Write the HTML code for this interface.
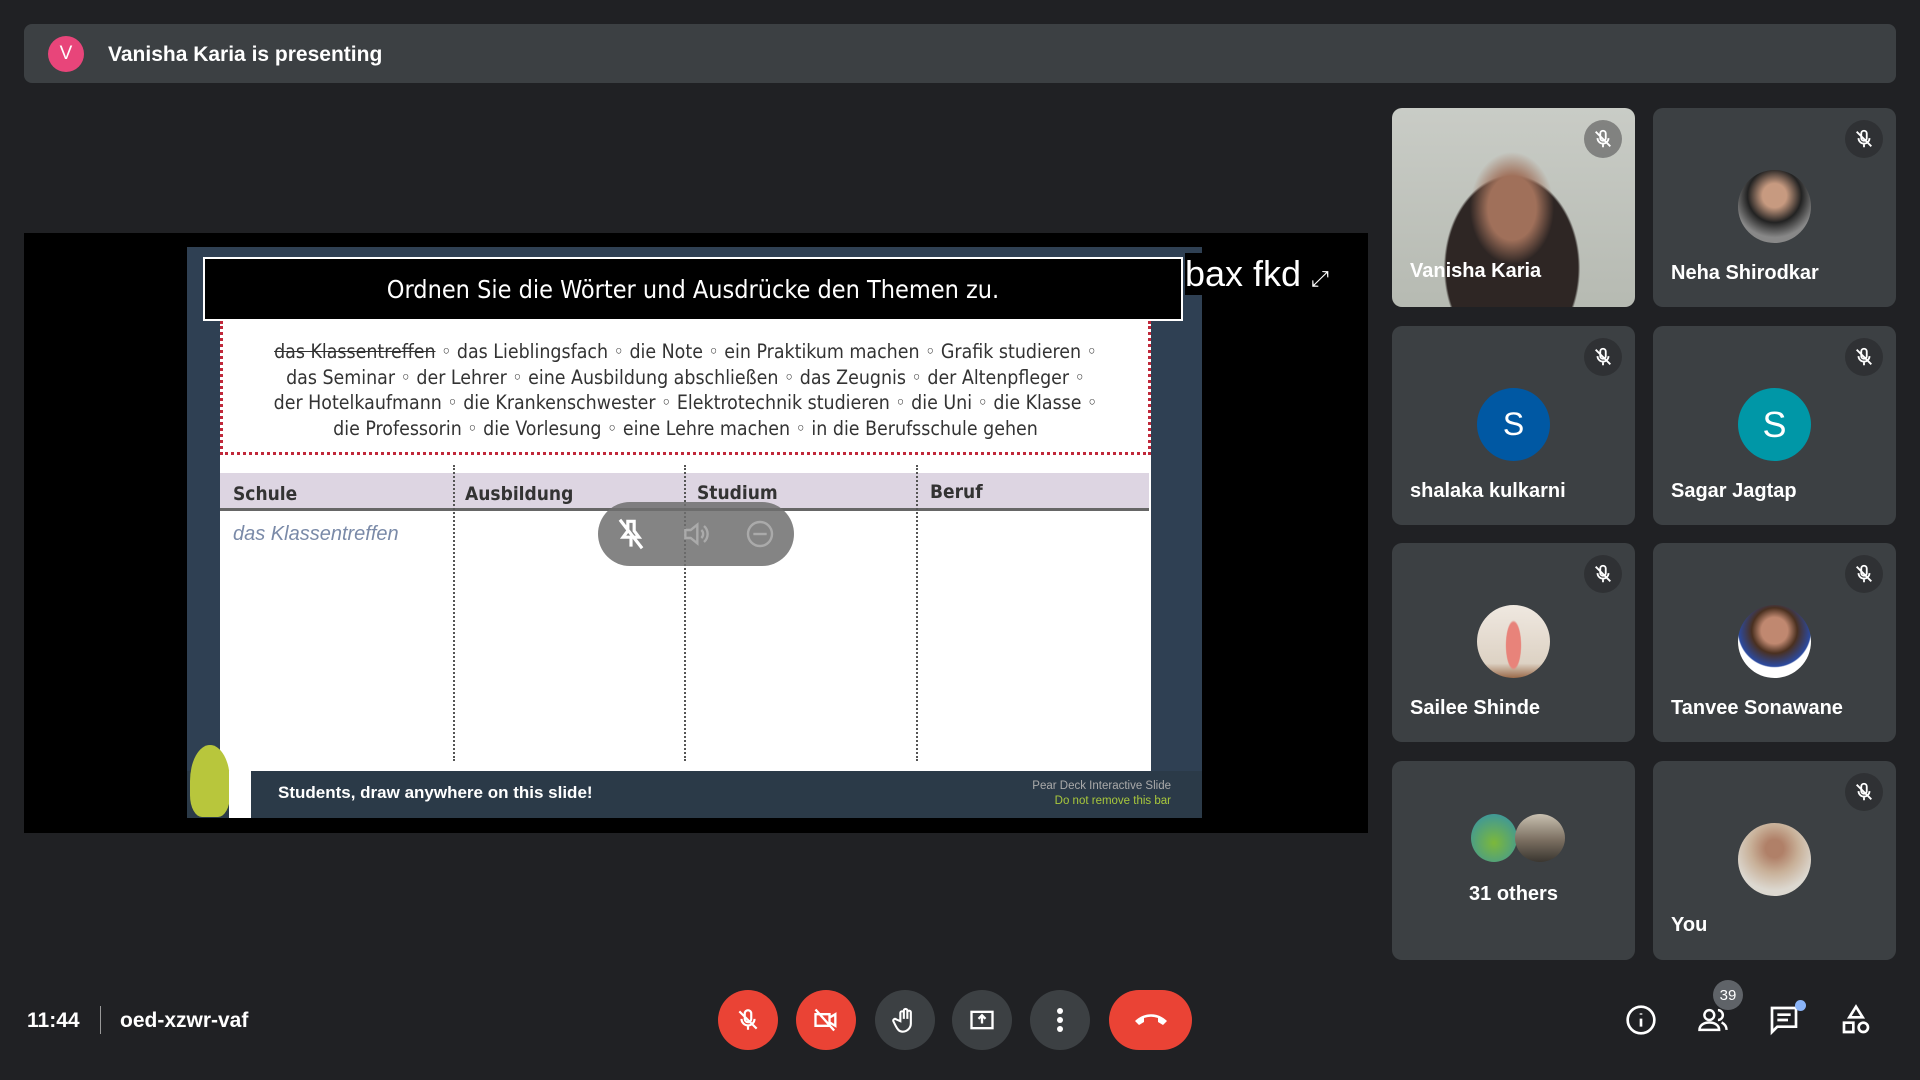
<!DOCTYPE html>
<html><head><meta charset="utf-8"><style>
*{margin:0;padding:0;box-sizing:border-box}
body{width:1920px;height:1080px;background:#202124;font-family:"Liberation Sans",sans-serif;position:relative;overflow:hidden;color:#fff}
.a{position:absolute}
.tile{position:absolute;width:243px;height:199px;background:#3c4043;border-radius:10px;overflow:hidden}
.mute{position:absolute;right:13px;top:12px;width:38px;height:38px;border-radius:50%;background:#2f3134;display:flex;align-items:center;justify-content:center}
.av{position:absolute;left:85px;top:62px;width:73px;height:73px;border-radius:50%;display:flex;align-items:center;justify-content:center;font-size:32px}
.nm{position:absolute;left:18px;top:154px;font-size:20px;font-weight:bold;white-space:nowrap}
.btn{position:absolute;top:990px;width:60px;height:60px;border-radius:50%;background:#3c4043;display:flex;align-items:center;justify-content:center}
.red{background:#ea4335}
.ri{position:absolute;top:1004px;width:32px;height:32px;display:flex;align-items:center;justify-content:center}
</style></head><body>
<div class="a" style="left:24px;top:24px;width:1872px;height:59px;background:#3c4043;border-radius:8px"></div>
<div class="a" style="left:48px;top:36px;width:36px;height:36px;border-radius:50%;background:#e8457a;font-size:19px;display:flex;align-items:center;justify-content:center">V</div>
<div class="a" style="left:108px;top:43px;font-size:21px;font-weight:bold">Vanisha Karia is presenting</div>

<div class="a" style="left:24px;top:233px;width:1344px;height:600px;background:#000"></div>
<div class="a" style="left:187px;top:247px;width:1015px;height:571px;background:#2f4053"></div>
<div class="a" style="left:203px;top:257px;width:980px;height:64px;background:#000;border:2px solid #fff;font-size:25px;display:flex;align-items:center;justify-content:center;font-family:'DejaVu Sans Condensed','Liberation Sans',sans-serif">Ordnen Sie die Wörter und Ausdrücke den Themen zu.</div>
<div class="a" style="left:1185px;top:253px;font-size:36px;background:#000;padding-right:6px">bax fkd <span style="font-size:22px">⤢</span></div>
<div class="a" style="left:220px;top:321px;width:931px;height:134px;background:#fff;border:3px dotted #c0283a;border-top:none;color:#333;font-size:19.4px;line-height:25.5px;text-align:center;padding-top:18px;font-family:'DejaVu Sans Condensed','Liberation Sans Narrow',sans-serif">
<s>das Klassentreffen</s> ◦ das Lieblingsfach ◦ die Note ◦ ein Praktikum machen ◦ Grafik studieren ◦<br>das Seminar ◦ der Lehrer ◦ eine Ausbildung abschließen ◦ das Zeugnis ◦ der Altenpfleger ◦<br>der Hotelkaufmann ◦ die Krankenschwester ◦ Elektrotechnik studieren ◦ die Uni ◦ die Klasse ◦<br>die Professorin ◦ die Vorlesung ◦ eine Lehre machen ◦ in die Berufsschule gehen</div>
<div class="a" style="left:220px;top:455px;width:931px;height:316px;background:#fff"></div>
<div class="a" style="left:220px;top:473px;width:929px;height:38px;background:#ddd5e2;border-bottom:3px solid #666"></div>
<div class="a" style="left:233px;top:483px;font-size:19px;font-weight:bold;color:#333;font-family:'DejaVu Sans Condensed',sans-serif">Schule</div>
<div class="a" style="left:465px;top:483px;font-size:19px;font-weight:bold;color:#333;font-family:'DejaVu Sans Condensed',sans-serif">Ausbildung</div>
<div class="a" style="left:697px;top:482px;font-size:19px;font-weight:bold;color:#333;font-family:'DejaVu Sans Condensed',sans-serif">Studium</div>
<div class="a" style="left:930px;top:481px;font-size:19px;font-weight:bold;color:#333;font-family:'DejaVu Sans Condensed',sans-serif">Beruf</div>
<div class="a" style="left:453px;top:465px;height:296px;border-left:2px dotted #555"></div>
<div class="a" style="left:684px;top:465px;height:296px;border-left:2px dotted #555"></div>
<div class="a" style="left:916px;top:465px;height:296px;border-left:2px dotted #555"></div>
<div class="a" style="left:233px;top:523px;font-size:20px;font-style:italic;color:#7a8aa8">das Klassentreffen</div>
<div class="a" style="left:187px;top:771px;width:1015px;height:47px;background:#2b3a48"></div>
<div class="a" style="left:190px;top:745px;width:40px;height:72px;background:#b8c63c;border-radius:50% 50% 30% 30%"></div>
<div class="a" style="left:229px;top:771px;width:22px;height:47px;background:#fff"></div>
<div class="a" style="left:278px;top:783px;font-size:17px;font-weight:bold">Students, draw anywhere on this slide!</div>
<div class="a" style="left:1000px;top:779px;width:171px;text-align:right;font-size:11.5px;color:#aaa;line-height:15px">Pear Deck Interactive Slide<br><span style="color:#a8c83c">Do not remove this bar</span></div>
<div class="a" style="left:598px;top:502px;width:196px;height:64px;border-radius:32px;background:rgba(110,110,110,.85)"></div>
<svg class="a" style="left:612px;top:515px" width="38" height="38" viewBox="0 0 24 24" fill="none" stroke="#fff" stroke-width="2"><path d="M9 4h6M10 4v6l-3 4h10l-3-4V4M12 14v6M5 3l14 18"/></svg>
<svg class="a" style="left:680px;top:518px" width="32" height="32" viewBox="0 0 24 24" fill="none" stroke="#aaa" stroke-width="1.8"><path d="M4 9h4l5-4v14l-5-4H4zM16 9a4 4 0 010 6M18 6a8 8 0 010 12"/></svg>
<svg class="a" style="left:744px;top:518px" width="32" height="32" viewBox="0 0 24 24" fill="none" stroke="#aaa" stroke-width="1.8"><circle cx="12" cy="12" r="9"/><path d="M7 12h10"/></svg>

<div class="tile" style="left:1392px;top:108px;background:radial-gradient(ellipse 60px 80px at 120px 100px,#a0705a 40%,transparent 70%),radial-gradient(ellipse 110px 150px at 120px 160px,#2e2624 60%,transparent 62%),linear-gradient(#c9ccc6,#b6bab2)">
<div class="mute" style="background:rgba(100,100,100,.7)"><svg width="22" height="22" viewBox="0 0 24 24" fill="none" stroke="#fff" stroke-width="2"><path d="M12 3a3 3 0 00-3 3v5a3 3 0 006 0V6a3 3 0 00-3-3zM6 11a6 6 0 0012 0M12 17v4M4 4l16 16"/></svg></div>
<div class="nm" style="top:152px">Vanisha Karia</div></div>
<div class="tile" style="left:1653px;top:108px"><div class="mute"><svg width="22" height="22" viewBox="0 0 24 24" fill="none" stroke="#fff" stroke-width="2"><path d="M12 3a3 3 0 00-3 3v5a3 3 0 006 0V6a3 3 0 00-3-3zM6 11a6 6 0 0012 0M12 17v4M4 4l16 16"/></svg></div>
<div class="av" style="background:radial-gradient(circle at 50% 35%,#c79a80 20%,#222 45%,#888 70%)"></div><div class="nm">Neha Shirodkar</div></div>

<div class="tile" style="left:1392px;top:326px"><div class="mute"><svg width="22" height="22" viewBox="0 0 24 24" fill="none" stroke="#fff" stroke-width="2"><path d="M12 3a3 3 0 00-3 3v5a3 3 0 006 0V6a3 3 0 00-3-3zM6 11a6 6 0 0012 0M12 17v4M4 4l16 16"/></svg></div>
<div class="av" style="background:#0058a3">S</div><div class="nm">shalaka kulkarni</div></div>
<div class="tile" style="left:1653px;top:326px"><div class="mute"><svg width="22" height="22" viewBox="0 0 24 24" fill="none" stroke="#fff" stroke-width="2"><path d="M12 3a3 3 0 00-3 3v5a3 3 0 006 0V6a3 3 0 00-3-3zM6 11a6 6 0 0012 0M12 17v4M4 4l16 16"/></svg></div>
<div class="av" style="background:#0097a7;font-size:36px">S</div><div class="nm">Sagar Jagtap</div></div>

<div class="tile" style="left:1392px;top:543px"><div class="mute"><svg width="22" height="22" viewBox="0 0 24 24" fill="none" stroke="#fff" stroke-width="2"><path d="M12 3a3 3 0 00-3 3v5a3 3 0 006 0V6a3 3 0 00-3-3zM6 11a6 6 0 0012 0M12 17v4M4 4l16 16"/></svg></div>
<div class="av" style="background:radial-gradient(ellipse 8px 25px at 50% 55%,#e8837a 90%,transparent),linear-gradient(#efe8e0,#ddd2c4 80%,#9a6a4a)"></div><div class="nm">Sailee Shinde</div></div>
<div class="tile" style="left:1653px;top:543px"><div class="mute"><svg width="22" height="22" viewBox="0 0 24 24" fill="none" stroke="#fff" stroke-width="2"><path d="M12 3a3 3 0 00-3 3v5a3 3 0 006 0V6a3 3 0 00-3-3zM6 11a6 6 0 0012 0M12 17v4M4 4l16 16"/></svg></div>
<div class="av" style="background:radial-gradient(circle at 50% 35%,#c08870 22%,#4a3020 38%,#2b4aa0 60%,#fff 62%)"></div><div class="nm">Tanvee Sonawane</div></div>

<div class="tile" style="left:1392px;top:761px">
<div class="a" style="left:79px;top:53px;width:46px;height:48px;border-radius:50%;background:radial-gradient(circle at 50% 60%,#7cb83a,#2f8fb0)"></div>
<div class="a" style="left:123px;top:53px;width:50px;height:48px;border-radius:50%;background:linear-gradient(#c8c0b0,#7a6e60 55%,#3a3630)"></div>
<div class="a" style="left:0;width:243px;top:122px;text-align:center;font-size:20px;font-weight:bold">31 others</div></div>
<div class="tile" style="left:1653px;top:761px"><div class="mute"><svg width="22" height="22" viewBox="0 0 24 24" fill="none" stroke="#fff" stroke-width="2"><path d="M12 3a3 3 0 00-3 3v5a3 3 0 006 0V6a3 3 0 00-3-3zM6 11a6 6 0 0012 0M12 17v4M4 4l16 16"/></svg></div>
<div class="av" style="background:radial-gradient(circle at 50% 35%,#b08068 15%,#c8b098 40%,#dcd8d0 70%)"></div><div class="nm" style="top:153px">You</div></div>

<div class="a" style="left:27px;top:1009px;font-size:21px;font-weight:bold">11:44</div>
<div class="a" style="left:100px;top:1006px;width:1px;height:28px;background:#999"></div>
<div class="a" style="left:120px;top:1009px;font-size:21px;font-weight:bold">oed-xzwr-vaf</div>

<div class="btn red" style="left:718px"><svg width="26" height="26" viewBox="0 0 24 24" fill="none" stroke="#fff" stroke-width="2"><path d="M12 3a3 3 0 00-3 3v5a3 3 0 006 0V6a3 3 0 00-3-3zM6 11a6 6 0 0012 0M12 17v4M4 4l16 16"/></svg></div>
<div class="btn red" style="left:796px"><svg width="28" height="28" viewBox="0 0 24 24" fill="none" stroke="#fff" stroke-width="2"><path d="M3 7h12v10H3zM15 10l5-3v10l-5-3M3 3l16 18"/></svg></div>
<div class="btn" style="left:875px"><svg width="28" height="28" viewBox="0 0 24 24" fill="none" stroke="#fff" stroke-width="1.8"><path d="M8 13V6a1.5 1.5 0 013 0v5V4a1.5 1.5 0 013 0v7V5.5a1.5 1.5 0 013 0V15a7 7 0 01-7 7c-3 0-4.5-2-6-5l-2-4a1.5 1.5 0 012.5-1.5z"/></svg></div>
<div class="btn" style="left:952px"><svg width="28" height="28" viewBox="0 0 24 24" fill="none" stroke="#fff" stroke-width="2"><rect x="3" y="5" width="18" height="14"/><path d="M12 15V9M9 11l3-3 3 3"/></svg></div>
<div class="btn" style="left:1030px"><svg width="8" height="26" viewBox="0 0 8 26" fill="#fff"><circle cx="4" cy="4" r="3"/><circle cx="4" cy="13" r="3"/><circle cx="4" cy="22" r="3"/></svg></div>
<div class="btn red" style="left:1109px;width:83px;border-radius:30px"><svg width="36" height="20" viewBox="0 0 36 20" fill="#fff"><path d="M2 11c9-9 23-9 32 0l-4 4-5-3v-4a20 20 0 00-14 0v4l-5 3z"/></svg></div>

<div class="ri" style="left:1625px"><svg width="32" height="32" viewBox="0 0 24 24" fill="none" stroke="#fff" stroke-width="2"><circle cx="12" cy="12" r="10"/><path d="M12 11v6M12 7v1"/></svg></div>
<div class="ri" style="left:1697px"><svg width="34" height="32" viewBox="0 0 26 24" fill="none" stroke="#fff" stroke-width="2"><circle cx="10" cy="8" r="4"/><path d="M2 20c0-4 4-6 8-6s8 2 8 6zM17 4a4 4 0 010 8M20 14c2 1 4 3 4 6"/></svg></div>
<div class="a" style="left:1713px;top:980px;width:30px;height:30px;border-radius:50%;background:#5f6368;font-size:15px;display:flex;align-items:center;justify-content:center">39</div>
<div class="ri" style="left:1768px"><svg width="32" height="32" viewBox="0 0 24 24" fill="none" stroke="#fff" stroke-width="2"><path d="M3 3h18v14H7l-4 4zM7 8h10M7 12h8"/></svg></div>
<div class="a" style="left:1795px;top:1000px;width:11px;height:11px;border-radius:50%;background:#8ab4f8"></div>
<div class="ri" style="left:1840px"><svg width="32" height="32" viewBox="0 0 24 24" fill="none" stroke="#fff" stroke-width="2"><path d="M12 2l5 8H7zM3 14h7v7H3z"/><circle cx="17.5" cy="17.5" r="3.5"/></svg></div>
</body></html>
